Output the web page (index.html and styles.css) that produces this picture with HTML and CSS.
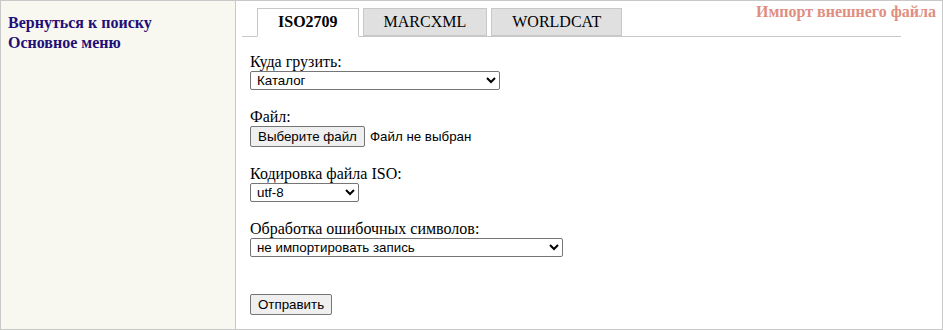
FILE: index.html
```html
<!DOCTYPE html>
<html lang="ru">
<head>
  <meta charset="UTF-8">
  <meta name="viewport" content="width=device-width, initial-scale=1.0">
  <title>Импорт внешнего файла</title>
  <link rel="stylesheet" href="styles.css">
</head>
<body>
  <div class="page">
    <aside class="sidebar">
      <a href="#" class="side-link">Вернуться к поиску</a>
      <a href="#" class="side-link">Основное меню</a>
    </aside>

    <main class="content">
      <h1 class="page-title">Импорт внешнего файла</h1>

      <ul class="tabs">
        <li class="tab active">ISO2709</li>
        <li class="tab">MARCXML</li>
        <li class="tab">WORLDCAT</li>
      </ul>

      <form class="import-form">
        <div class="field">
          <label class="field-label">Куда грузить:</label>
          <select class="control select-target">
            <option>Каталог</option>
          </select>
        </div>

        <div class="field">
          <label class="field-label">Файл:</label>
          <div class="file-row">
            <button type="button" class="btn">Выберите файл</button>
            <span class="file-name">Файл не выбран</span>
          </div>
        </div>

        <div class="field">
          <label class="field-label">Кодировка файла ISO:</label>
          <select class="control select-encoding">
            <option>utf-8</option>
          </select>
        </div>

        <div class="field last">
          <label class="field-label">Обработка ошибочных символов:</label>
          <select class="control select-errors">
            <option>не импортировать запись</option>
          </select>
        </div>

        <button type="submit" class="btn">Отправить</button>
      </form>
    </main>
  </div>
</body>
</html>
```

FILE: styles.css
```css
body {
  margin: 0;
  font-family: "Liberation Serif", "Times New Roman", serif;
  font-size: 16px;
  color: #000;
  background: #fff;
}
.page {
  display: flex;
  height: 330px;
  box-sizing: border-box;
  border: 1px solid #c8c8c8;
}
.sidebar {
  width: 235px;
  flex-shrink: 0;
  box-sizing: border-box;
  padding: 12px 7px;
  background-color: #f9f8f0;
  border-right: 1px solid #c8c8c8;
  display: flex;
  flex-direction: column;
}
.side-link {
  color: #1f0f78;
  font-weight: bold;
  line-height: 20px;
  text-decoration: none;
}
.content {
  position: relative;
  flex: 1;
}
.page-title {
  position: absolute;
  top: 2px;
  right: 6px;
  margin: 0;
  font-size: 16px;
  line-height: 18px;
  color: #df8e7f;
}
.tabs {
  display: flex;
  align-items: flex-end;
  gap: 4px;
  list-style: none;
  margin: 7px 41px 0 6px;
  padding: 0 0 0 15px;
  border-bottom: 1px solid #c8c8c8;
}
.tab {
  padding: 4px 20px;
  line-height: 18px;
  border: 1px solid #c8c8c8;
  background-color: #e0e0e0;
}
.tab.active {
  background-color: #fff;
  font-weight: bold;
  border-bottom-color: #fff;
  padding-bottom: 5px;
  margin-bottom: -1px;
}
.import-form {
  padding: 16px 0 0 14px;
}
.field {
  margin-bottom: 18px;
}
.field.last {
  margin-bottom: 37px;
}
.field-label {
  display: block;
  line-height: 18px;
}
.control {
  display: block;
  height: 19px;
  box-sizing: border-box;
  font-family: "Liberation Sans", Arial, sans-serif;
  font-size: 13.33px;
  border: 1px solid #767676;
  border-radius: 2px;
  background: #fff;
  padding: 0 2px;
}
.select-target { width: 250px; }
.select-encoding { width: 109px; }
.select-errors { width: 313px; }
.file-row {
  display: flex;
  align-items: center;
  gap: 5px;
}
.btn {
  height: 21px;
  box-sizing: border-box;
  padding: 1px 7px;
  font-family: "Liberation Sans", Arial, sans-serif;
  font-size: 13.33px;
  color: #000;
  background-color: #efefef;
  border: 1px solid #767676;
  border-radius: 2px;
}
.file-name {
  font-family: "Liberation Sans", Arial, sans-serif;
  font-size: 13.33px;
}
```
